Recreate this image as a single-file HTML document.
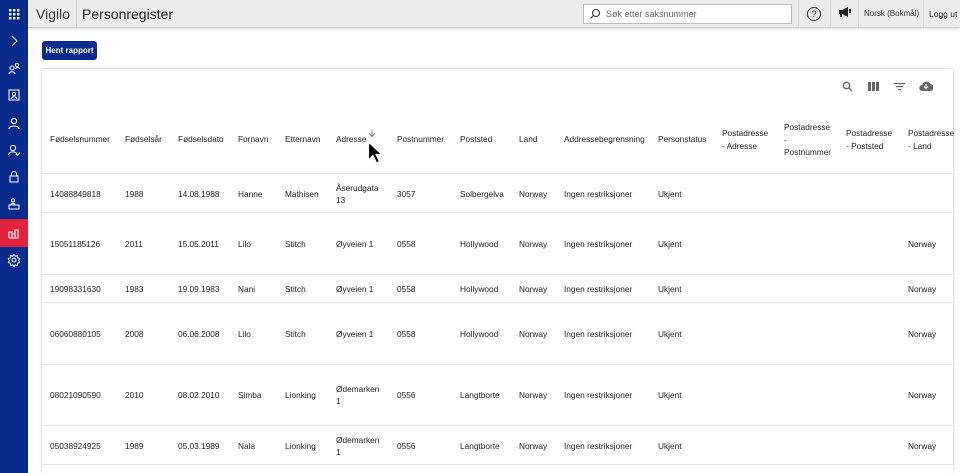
<!DOCTYPE html>
<html style="overflow:hidden;width:960px;height:473px"><head><meta charset="utf-8"><style>
*{margin:0;padding:0;box-sizing:border-box}
body{width:960px;height:473px;overflow:hidden;background:#fff;font-family:"Liberation Sans",Arial,sans-serif;position:relative;color:#222}
.sb{position:absolute;left:0;top:0;width:28px;height:473px;background:#0a2b8e}
.top{position:absolute;left:28px;top:0;right:0;height:28px;background:#ececec;border-bottom:1px solid #cfcfcf;box-shadow:0 1px 2px rgba(0,0,0,.15)}
.t{position:absolute;white-space:nowrap}
.ic{position:absolute;left:7px;width:14px;height:14px}
.card{position:absolute;left:42px;top:69px;width:911px;height:404px;background:#fff;box-shadow:0 0 3px rgba(0,0,0,.25);border-radius:2px}
.c{position:absolute;font-size:8.3px;color:#222;line-height:12px;white-space:nowrap;margin-top:1px}
.hl{position:absolute;left:42px;width:911px;height:1px;background:#e6e6e6}
</style></head><body>
<div class="sb">
<svg class="ic" style="top:7px" viewBox="0 0 14 14" fill="#fff"><rect x="2" y="2" width="2.4" height="2.4"/><rect x="6" y="2" width="2.4" height="2.4"/><rect x="10" y="2" width="2.4" height="2.4"/><rect x="2" y="6" width="2.4" height="2.4"/><rect x="6" y="6" width="2.4" height="2.4"/><rect x="10" y="6" width="2.4" height="2.4"/><rect x="2" y="10" width="2.4" height="2.4"/><rect x="6" y="10" width="2.4" height="2.4"/><rect x="10" y="10" width="2.4" height="2.4"/></svg>
<svg class="ic" style="top:34px" viewBox="0 0 14 14" fill="none" stroke="#fff" stroke-width="1"><path d="M5 2l5 5-5 5"/></svg>
<svg class="ic" style="top:61px" viewBox="0 0 14 14" fill="none" stroke="#fff" stroke-width="1"><circle cx="5" cy="7" r="2"/><path d="M2 13c0-3 6-3 6 0"/><circle cx="10" cy="4" r="1.6"/><path d="M8 8c1-2 4-2 5 0"/></svg>
<svg class="ic" style="top:88px" viewBox="0 0 14 14" fill="none" stroke="#fff" stroke-width="1"><rect x="2" y="2" width="10" height="10"/><circle cx="7" cy="6" r="1.6"/><path d="M4 11c1-3 5-3 6 0"/></svg>
<svg class="ic" style="top:116px" viewBox="0 0 14 14" fill="none" stroke="#fff" stroke-width="1"><circle cx="7" cy="5" r="2.6"/><path d="M2 13c0-4 10-4 10 0"/></svg>
<svg class="ic" style="top:143px" viewBox="0 0 14 14" fill="none" stroke="#fff" stroke-width="1"><circle cx="6" cy="5" r="2.6"/><path d="M1.5 12c0-4 8-4 8-1M9 11l1.5 1.5 2.5-3"/></svg>
<svg class="ic" style="top:170px" viewBox="0 0 14 14" fill="none" stroke="#fff" stroke-width="1"><rect x="3" y="6" width="8" height="6"/><path d="M4.5 6V4a2.5 2.5 0 015 0v2"/></svg>
<svg class="ic" style="top:197px" viewBox="0 0 14 14" fill="none" stroke="#fff" stroke-width="1"><rect x="2" y="8" width="10" height="4"/><circle cx="6" cy="3.5" r="1.5"/><path d="M4 8c0-2 4-2 4 0M2 8h10"/></svg>
<div style="position:absolute;left:0;top:219px;width:28px;height:28px;background:#e2233d"></div>
<svg class="ic" style="top:226px" viewBox="0 0 14 14" fill="none" stroke="#fff" stroke-width="1.1"><path d="M2 12V6h3v6M5 12V8h3v4M8 12V4h3v8H2"/></svg>
<svg class="ic" style="top:253px" viewBox="0 0 14 14" fill="none" stroke="#fff" stroke-width="1"><circle cx="7" cy="7" r="2"/><path d="M7 1.5l1.3 1.7 2-.6.3 2.1 2 .9-1 1.9 1 1.9-2 .9-.3 2.1-2-.6L7 13.5l-1.3-1.7-2 .6-.3-2.1-2-.9 1-1.9-1-1.9 2-.9.3-2.1 2 .6z"/></svg>
</div>
<div class="top">
<div class="t" style="left:8px;top:6px;font-size:14px;color:#333">Vigilo</div>
<div style="position:absolute;left:48px;top:0;width:1px;height:28px;background:#d0d0d0"></div>
<div class="t" style="left:54px;top:6px;font-size:14px;color:#222">Personregister</div>
<div style="position:absolute;left:555px;top:4px;width:209px;height:20px;background:#fff;border:1px solid #bbb"></div>
<svg style="position:absolute;left:561px;top:8px" width="12" height="12" viewBox="0 0 12 12" fill="none" stroke="#333" stroke-width="1.1"><circle cx="7" cy="5" r="3.5"/><path d="M4.5 7.5L1.5 10.5"/></svg>
<div class="t" style="left:578px;top:9px;font-size:9px;color:#666">Søk etter saksnummer</div>
<div style="position:absolute;left:770px;top:0;width:1px;height:28px;background:#d6d6d6"></div>
<div style="position:absolute;left:779px;top:7px;width:14px;height:14px;border:1.2px solid #333;border-radius:50%;font-size:9px;text-align:center;line-height:12px;color:#333">?</div>
<div style="position:absolute;left:802px;top:0;width:1px;height:28px;background:#d6d6d6"></div>
<svg style="position:absolute;left:810px;top:6px" width="14" height="12" viewBox="0 0 14 12" fill="#222"><path d="M1 4h3l6-3v10L4 8H1z"/><rect x="2" y="8" width="2" height="3"/><rect x="11" y="3" width="2" height="4"/></svg>
<div style="position:absolute;left:830px;top:0;width:1px;height:28px;background:#d6d6d6"></div>
<div class="t" style="left:836px;top:9px;font-size:8px;color:#333">Norsk (Bokmål)</div>
<div style="position:absolute;left:895px;top:0;width:1px;height:28px;background:#d6d6d6"></div>
<div class="t" style="left:901px;top:9px;font-size:8.5px;color:#222">Logg ut</div>
</div>
<div style="position:absolute;left:42px;top:41px;width:55px;height:19px;background:#0a2b8e;border-radius:3px;color:#fff;font-size:8px;font-weight:bold;text-align:center;line-height:19px">Hent rapport</div>
<div class="card"></div>
<svg style="position:absolute;left:842px;top:81px" width="11" height="11" viewBox="0 0 11 11" fill="none" stroke="#666" stroke-width="1.3"><circle cx="4.5" cy="4.5" r="3.2"/><path d="M7 7l3 3"/></svg>
<svg style="position:absolute;left:868px;top:82px" width="11" height="9" viewBox="0 0 11 9" fill="#666"><rect x="0" y="0" width="3" height="9"/><rect x="4" y="0" width="3" height="9"/><rect x="8" y="0" width="3" height="9"/></svg>
<svg style="position:absolute;left:894px;top:82px" width="11" height="9" viewBox="0 0 11 9" fill="#666"><rect x="0" y="1" width="11" height="1.2"/><rect x="2" y="4" width="7" height="1.2"/><rect x="4" y="7" width="3" height="1.2"/></svg>
<svg style="position:absolute;left:919px;top:80px" width="14" height="12" viewBox="0 0 14 12" fill="#666"><path d="M3.5 11a3 3 0 01-.3-6A4.5 4.5 0 0111.5 4a3.5 3.5 0 01-.5 7z"/><path d="M7 4v4M5 6.5l2 2 2-2" stroke="#fff" stroke-width="1.1" fill="none"/></svg>
<div class="c" style="left:50px;top:132px">Fødselsnummer</div>
<div class="c" style="left:125px;top:132px">Fødselsår</div>
<div class="c" style="left:178px;top:132px">Fødselsdato</div>
<div class="c" style="left:238px;top:132px">Fornavn</div>
<div class="c" style="left:285px;top:132px">Etternavn</div>
<div class="c" style="left:336px;top:132px">Adresse</div>
<svg style="position:absolute;left:368px;top:129px" width="8" height="9" viewBox="0 0 8 9" fill="none" stroke="#777" stroke-width="0.9"><path d="M4 0.5v7M1 4.5l3 3 3-3"/></svg>
<div class="c" style="left:397px;top:132px">Postnummer</div>
<div class="c" style="left:460px;top:132px">Poststed</div>
<div class="c" style="left:519px;top:132px">Land</div>
<div class="c" style="left:564px;top:132px">Addressebegrensning</div>
<div class="c" style="left:658px;top:132px">Personstatus</div>
<div class="c" style="left:722px;top:126px;line-height:12.5px">Postadresse<br>- Adresse</div>
<div class="c" style="left:784px;top:120px;line-height:12.5px">Postadresse<br>-<br>Postnummer</div>
<div class="c" style="left:846px;top:126px;line-height:12.5px">Postadresse<br>- Poststed</div>
<div class="c" style="left:908px;top:126px;line-height:12.5px">Postadresse<br>- Land</div>
<svg style="position:absolute;left:367px;top:141px" width="16" height="24" viewBox="0 0 16 24"><path d="M1.5 1v18l4.5-4.5 3.5 7.5 3-1.5-3.5-7h6z" fill="#000" stroke="#fff" stroke-width="1.2"/></svg>
<div class="hl" style="top:173px"></div><div class="hl" style="top:212px"></div><div class="hl" style="top:274px"></div><div class="hl" style="top:302px"></div><div class="hl" style="top:364px"></div><div class="hl" style="top:425px"></div><div class="hl" style="top:464px"></div>

<div class="c" style="left:50px;top:187px">14088849818</div><div class="c" style="left:125px;top:187px">1988</div><div class="c" style="left:178px;top:187px">14.08.1988</div><div class="c" style="left:238px;top:187px">Hanne</div><div class="c" style="left:285px;top:187px">Mathisen</div><div class="c" style="left:336px;top:181px">Åserudgata<br>13</div><div class="c" style="left:397px;top:187px">3057</div><div class="c" style="left:460px;top:187px">Solbergelva</div><div class="c" style="left:519px;top:187px">Norway</div><div class="c" style="left:564px;top:187px">Ingen restriksjoner</div><div class="c" style="left:658px;top:187px">Ukjent</div>

<div class="c" style="left:50px;top:237px">15051185126</div><div class="c" style="left:125px;top:237px">2011</div><div class="c" style="left:178px;top:237px">15.05.2011</div><div class="c" style="left:238px;top:237px">Lilo</div><div class="c" style="left:285px;top:237px">Stitch</div><div class="c" style="left:336px;top:237px">Øyveien 1</div><div class="c" style="left:397px;top:237px">0558</div><div class="c" style="left:460px;top:237px">Hollywood</div><div class="c" style="left:519px;top:237px">Norway</div><div class="c" style="left:564px;top:237px">Ingen restriksjoner</div><div class="c" style="left:658px;top:237px">Ukjent</div><div class="c" style="left:908px;top:237px">Norway</div>

<div class="c" style="left:50px;top:282px">19098331630</div><div class="c" style="left:125px;top:282px">1983</div><div class="c" style="left:178px;top:282px">19.09.1983</div><div class="c" style="left:238px;top:282px">Nani</div><div class="c" style="left:285px;top:282px">Stitch</div><div class="c" style="left:336px;top:282px">Øyveien 1</div><div class="c" style="left:397px;top:282px">0558</div><div class="c" style="left:460px;top:282px">Hollywood</div><div class="c" style="left:519px;top:282px">Norway</div><div class="c" style="left:564px;top:282px">Ingen restriksjoner</div><div class="c" style="left:658px;top:282px">Ukjent</div><div class="c" style="left:908px;top:282px">Norway</div>

<div class="c" style="left:50px;top:327px">06060880105</div><div class="c" style="left:125px;top:327px">2008</div><div class="c" style="left:178px;top:327px">06.06.2008</div><div class="c" style="left:238px;top:327px">Lilo</div><div class="c" style="left:285px;top:327px">Stitch</div><div class="c" style="left:336px;top:327px">Øyveien 1</div><div class="c" style="left:397px;top:327px">0558</div><div class="c" style="left:460px;top:327px">Hollywood</div><div class="c" style="left:519px;top:327px">Norway</div><div class="c" style="left:564px;top:327px">Ingen restriksjoner</div><div class="c" style="left:658px;top:327px">Ukjent</div><div class="c" style="left:908px;top:327px">Norway</div>

<div class="c" style="left:50px;top:388px">08021090590</div><div class="c" style="left:125px;top:388px">2010</div><div class="c" style="left:178px;top:388px">08.02.2010</div><div class="c" style="left:238px;top:388px">Simba</div><div class="c" style="left:285px;top:388px">Lionking</div><div class="c" style="left:336px;top:382px">Ødemarken<br>1</div><div class="c" style="left:397px;top:388px">0556</div><div class="c" style="left:460px;top:388px">Langtborte</div><div class="c" style="left:519px;top:388px">Norway</div><div class="c" style="left:564px;top:388px">Ingen restriksjoner</div><div class="c" style="left:658px;top:388px">Ukjent</div><div class="c" style="left:908px;top:388px">Norway</div>

<div class="c" style="left:50px;top:439px">05038924925</div><div class="c" style="left:125px;top:439px">1989</div><div class="c" style="left:178px;top:439px">05.03.1989</div><div class="c" style="left:238px;top:439px">Nala</div><div class="c" style="left:285px;top:439px">Lionking</div><div class="c" style="left:336px;top:433px">Ødemarken<br>1</div><div class="c" style="left:397px;top:439px">0556</div><div class="c" style="left:460px;top:439px">Langtborte</div><div class="c" style="left:519px;top:439px">Norway</div><div class="c" style="left:564px;top:439px">Ingen restriksjoner</div><div class="c" style="left:658px;top:439px">Ukjent</div><div class="c" style="left:908px;top:439px">Norway</div>
</body></html>
